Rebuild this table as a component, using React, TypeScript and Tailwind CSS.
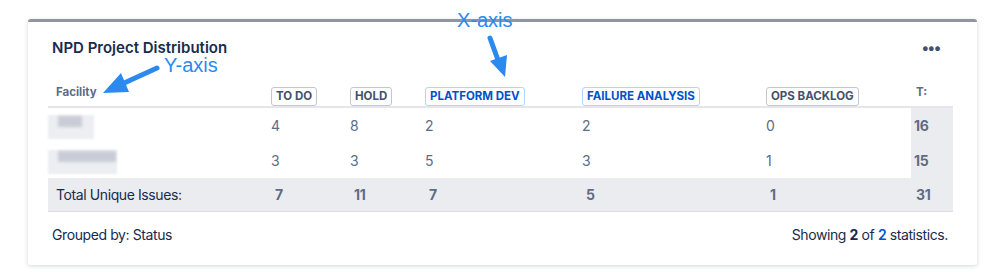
import React from "react";

const cols = "grid grid-cols-[220px_79px_75px_157px_184px_148px_42px]";

const Badge = ({ label, blue }: { label: string; blue?: boolean }) => (
  <span
    className={
      "inline-flex h-[19px] items-center rounded-[3px] border bg-white px-[4px] text-[11.5px] font-bold tracking-[0px] " +
      (blue
        ? "border-[#b3d4ff] text-[#0052cc]"
        : "border-[#c1c7d0] text-[#42526e]")
    }
  >
    {label}
  </span>
);

const Blurred = ({ wide }: { wide?: boolean }) => (
  <div className="relative h-[24px] w-[80px]">
    <div
      className={
        "absolute left-0 top-0 h-[24px] bg-[#eceef2] blur-[1px] " +
        (wide ? "w-[69px]" : "w-[46px]")
      }
    />
    <div
      className={
        "absolute left-[10px] top-[1px] h-[11px] bg-[#c9ccd6] blur-[1.5px] " +
        (wide ? "w-[58px]" : "w-[24px]")
      }
    />
  </div>
);

const rows = [
  { wide: false, vals: [4, 8, 2, 2, 0], total: 16 },
  { wide: true, vals: [3, 3, 5, 3, 1], total: 15 },
];

const totals = [7, 11, 7, 5, 1];

export default function App() {
  return (
    <div className="relative h-[272px] w-[998px] bg-white pl-[28px] pt-[19px] font-['Inter',sans-serif] tracking-[-0.4px]">
      <div className="h-[246px] w-[949px] rounded-[3px] border-t-[3px] border-[#8f96a1] bg-white pl-[20px] pr-[24px] shadow-[0_1px_4px_rgba(9,30,66,0.18)]">
        <div className="flex h-[33px] items-end justify-between pl-[4px]">
          <p className="text-[15px] font-semibold leading-[14px] tracking-[0px] text-[#172b4d]">
            NPD Project Distribution
          </p>
          <span className="mr-[13px] pb-[0px] text-[15px] font-bold leading-[14px] tracking-[-1px] text-[#42526e]">
            •••
          </span>
        </div>
        <div className="mt-[27px]">
          <div className={cols + " h-[26px] items-start border-b-2 border-[#e4e6eb]"}>
            <div className="pl-[8px] pt-[3px] text-[11.5px] font-bold leading-[14px] tracking-[0px] text-[#5e6c84]">
              Facility
            </div>
            <div className="pl-[3px]">
              <Badge label="TO DO" />
            </div>
            <div className="pl-[3px]">
              <Badge label="HOLD" />
            </div>
            <div className="pl-[3px]">
              <Badge label="PLATFORM DEV" blue />
            </div>
            <div className="pl-[3px]">
              <Badge label="FAILURE ANALYSIS" blue />
            </div>
            <div className="pl-[3px]">
              <Badge label="OPS BACKLOG" />
            </div>
            <div className="pl-[5px] pt-[3px] text-[11.5px] font-bold leading-[14px] tracking-[0px] text-[#5e6c84]">
              T:
            </div>
          </div>
          {rows.map((r, i) => (
            <div key={i} className={cols + " h-[35px] items-center text-[14px] text-[#5e6c84]"}>
              <div className="flex h-full items-center pt-[2px]">
                <Blurred wide={r.wide} />
              </div>
              {r.vals.map((v, j) => (
                <div key={j} className="pl-[3px]">
                  {v}
                </div>
              ))}
              <div className="flex h-full items-center bg-[#ebecf0] pl-[3px] font-bold">
                {r.total}
              </div>
            </div>
          ))}
          <div className={cols + " h-[34px] items-center border-b border-[#dcdfe4] bg-[#ebecf0] text-[14px]"}>
            <div className="pl-[8px] text-[#172b4d]">Total Unique Issues:</div>
            {totals.map((v, j) => (
              <div key={j} className="pl-[7px] font-bold text-[#5e6c84]">
                {v}
              </div>
            ))}
            <div className="pl-[5px] font-bold text-[#5e6c84]">31</div>
          </div>
        </div>
        <div className="mt-[13px] flex items-center justify-between pl-[4px] pr-[5px] text-[14px] leading-[20px] text-[#172b4d]">
          <span>Grouped by: Status</span>
          <span>
            Showing <b className="font-bold">2</b> of{" "}
            <span className="font-semibold text-[#0052cc]">2</span> statistics.
          </span>
        </div>
      </div>

      {/* annotations drawn over the card */}
      <span className="absolute left-[164px] top-[57px] font-['Liberation_Sans',sans-serif] text-[20px] leading-[16px] tracking-[0px] text-[#2a8af0]">
        Y-axis
      </span>
      <span className="absolute left-[457px] top-[12px] font-['Liberation_Sans',sans-serif] text-[20px] leading-[16px] tracking-[0px] text-[#2a8af0]">
        X-axis
      </span>
      <svg className="absolute left-0 top-0" width="998" height="272">
        <line x1="157" y1="68" x2="122" y2="84" stroke="#2a8af0" strokeWidth="5" strokeLinecap="round" />
        <polygon points="103,93 129,92 121,73" fill="#2a8af0" />
        <line x1="490" y1="38" x2="498" y2="60" stroke="#2a8af0" strokeWidth="5" strokeLinecap="round" />
        <polygon points="505,77 507,55 490,61" fill="#2a8af0" />
      </svg>
    </div>
  );
}
